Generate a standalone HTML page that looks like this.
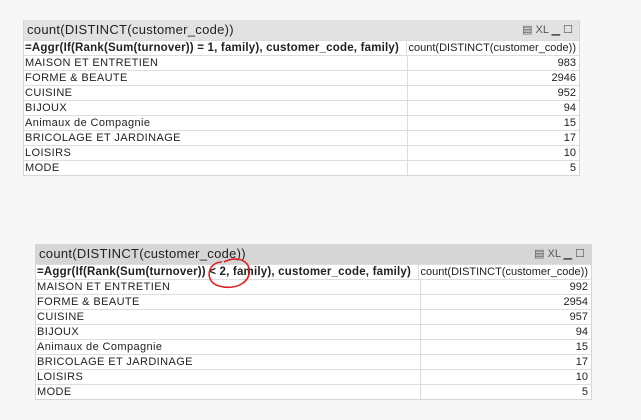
<!DOCTYPE html>
<html><head><style>
body{margin:0;width:641px;height:420px;background:#f7f7f7;position:relative;overflow:hidden;font-family:"Liberation Sans",sans-serif}
.box{position:absolute;background:#fff;border:1px solid #d6d6d6;border-top:none}
.title{height:20px;background:#e2e2e2;font-size:13px;color:#222;line-height:20px;padding-left:3px;position:relative;letter-spacing:0.3px}
.icons{position:absolute;right:6px;top:0;font-size:11px;color:#555;letter-spacing:0}
.row{height:14px;border-top:1px solid #ddd;font-size:11px;line-height:14px;color:#222;display:flex;white-space:nowrap}
.row div:first-child{padding-left:1px;border-right:1px solid #ddd;box-sizing:border-box;letter-spacing:0.4px;overflow:hidden}
.row div:last-child{flex:1;text-align:right;padding-right:3px}
.hdr div:first-child{font-weight:bold;letter-spacing:0.2px;font-size:11.5px}
.hdr div:last-child{text-align:left;padding-left:2px}
</style></head><body>
<div class="box" style="left:23px;top:20px;width:555px">
<div class="title">count(DISTINCT(customer_code))<span class="icons">▤ XL ▁ ☐</span></div>
<div class="row hdr"><div style="width:384px">=Aggr(If(Rank(Sum(turnover)) = 1, family), customer_code, family)</div><div>count(DISTINCT(customer_code))</div></div>
<div class="row"><div style="width:384px">MAISON ET ENTRETIEN</div><div>983</div></div>
<div class="row"><div style="width:384px">FORME &amp; BEAUTE</div><div>2946</div></div>
<div class="row"><div style="width:384px">CUISINE</div><div>952</div></div>
<div class="row"><div style="width:384px">BIJOUX</div><div>94</div></div>
<div class="row"><div style="width:384px">Animaux de Compagnie</div><div>15</div></div>
<div class="row"><div style="width:384px">BRICOLAGE ET JARDINAGE</div><div>17</div></div>
<div class="row"><div style="width:384px">LOISIRS</div><div>10</div></div>
<div class="row"><div style="width:384px">MODE</div><div>5</div></div>
</div>
<div class="box" style="left:35px;top:244px;width:555px">
<div class="title" style="background:#d6d6d6">count(DISTINCT(customer_code))<span class="icons">▤ XL ▁ ☐</span></div>
<div class="row hdr"><div style="width:385px">=Aggr(If(Rank(Sum(turnover)) &lt; 2, family), customer_code, family)</div><div>count(DISTINCT(customer_code))</div></div>
<div class="row"><div style="width:385px">MAISON ET ENTRETIEN</div><div>992</div></div>
<div class="row"><div style="width:385px">FORME &amp; BEAUTE</div><div>2954</div></div>
<div class="row"><div style="width:385px">CUISINE</div><div>957</div></div>
<div class="row"><div style="width:385px">BIJOUX</div><div>94</div></div>
<div class="row"><div style="width:385px">Animaux de Compagnie</div><div>15</div></div>
<div class="row"><div style="width:385px">BRICOLAGE ET JARDINAGE</div><div>17</div></div>
<div class="row"><div style="width:385px">LOISIRS</div><div>10</div></div>
<div class="row"><div style="width:385px">MODE</div><div>5</div></div>
</div>
<svg style="position:absolute;left:0;top:0" width="641" height="420"><path d="M222 262 C207 262 204 282 219 286 C237 291 252 281 249 268 C246 258 233 257 224 262" fill="none" stroke="#e02020" stroke-width="1.6"/></svg>
</body></html>
